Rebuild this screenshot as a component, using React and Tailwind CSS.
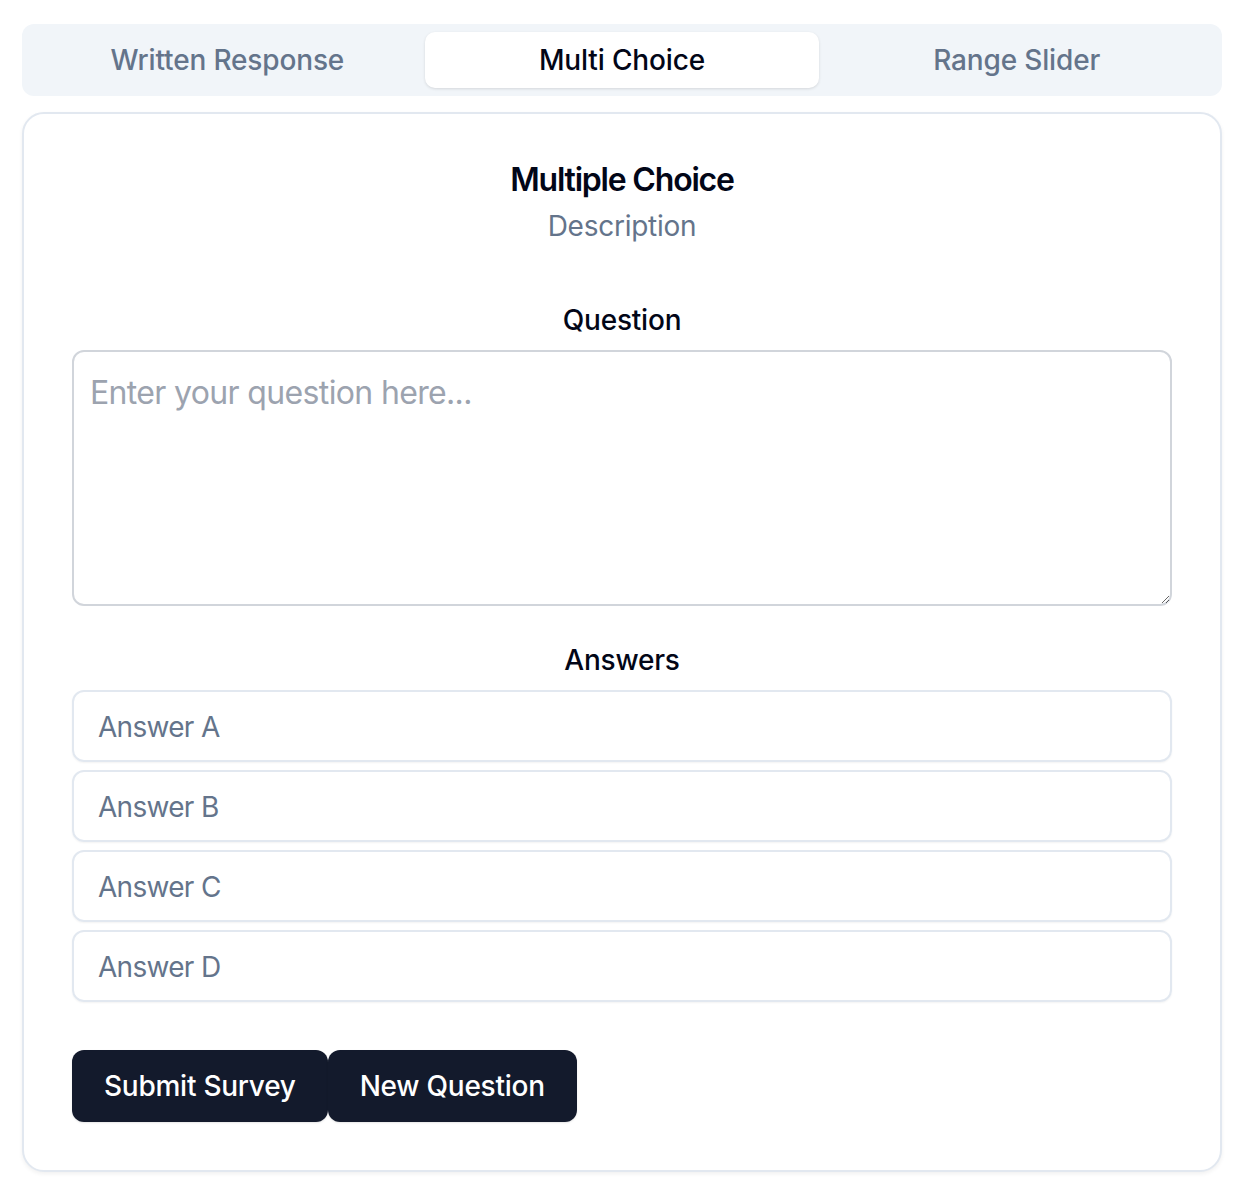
import { useState } from "react";

const tabs = ["Written Response", "Multi Choice", "Range Slider"];
const answers = ["Answer A", "Answer B", "Answer C", "Answer D"];

const App = () => {
  const [active, setActive] = useState("Multi Choice");
  const [question, setQuestion] = useState("");

  return (
    <div className="min-h-[1198px] bg-white pt-6 pl-[22px] font-['Inter',sans-serif]">
      <div className="w-[1200px]">
        {/* Tabs */}
        <div className="grid h-[72px] grid-cols-3 rounded-[12px] bg-[#f1f5f9] p-2">
          {tabs.map((tab) => (
            <button
              key={tab}
              onClick={() => setActive(tab)}
              className={
                tab === active
                  ? "rounded-[10px] bg-white text-[28px] font-medium tracking-[-0.15px] text-[#020617] shadow-[0_1px_3px_rgba(0,0,0,0.12)]"
                  : "rounded-[10px] text-[28px] font-medium tracking-[-0.15px] text-[#64748b]"
              }
            >
              {tab}
            </button>
          ))}
        </div>

        {/* Card */}
        <div className="mt-4 rounded-[22px] border-2 border-[#e2e8f0] bg-white p-12 shadow-[0_2px_4px_rgba(0,0,0,0.06)]">
          <div className="flex flex-col items-center">
            <h2 className="pt-[2px] text-[32px] font-semibold leading-[32px] tracking-[-1.2px] text-[#020617]">
              Multiple Choice
            </h2>
            <p className="mt-[10px] text-[28px] leading-[40px] tracking-[-0.25px] text-[#64748b]">Description</p>
          </div>

          <div className="mt-[60px] flex flex-col">
            <label className="text-center text-[28px] font-medium leading-[28px] tracking-[-0.2px] text-[#020617]">
              Question
            </label>
            <textarea
              value={question}
              onChange={(e) => setQuestion(e.target.value)}
              placeholder="Enter your question here..."
              className="mt-4 h-[256px] rounded-[12px] border-2 border-[#d1d5db] px-4 pt-[17px] pb-4 text-[32px] leading-[48px] tracking-[-0.65px] text-[#020617] outline-none placeholder:text-[#9ca3af]"
            />

            <label className="mt-10 text-center text-[28px] font-medium leading-[28px] tracking-[-0.2px] text-[#020617]">
              Answers
            </label>
            <div className="mt-4 flex flex-col gap-2">
              {answers.map((a) => (
                <input
                  key={a}
                  placeholder={a}
                  className="h-[72px] rounded-[12px] border-2 border-[#e2e8f0] px-6 pt-[2px] text-[28px] tracking-[-0.7px] text-[#020617] shadow-[0_1px_2px_rgba(0,0,0,0.05)] outline-none placeholder:text-[#64748b]"
                />
              ))}
            </div>

            <div className="mt-12 flex">
              <button className="h-[72px] rounded-[12px] bg-[#131a2c] px-8 text-[28px] font-medium tracking-[-0.25px] text-white shadow-[0_1px_2px_rgba(0,0,0,0.1)]">
                Submit Survey
              </button>
              <button className="h-[72px] rounded-[12px] bg-[#131a2c] px-8 text-[28px] font-medium tracking-[-0.25px] text-white shadow-[0_1px_2px_rgba(0,0,0,0.1)]">
                New Question
              </button>
            </div>
          </div>
        </div>
      </div>
    </div>
  );
};

export default App;
